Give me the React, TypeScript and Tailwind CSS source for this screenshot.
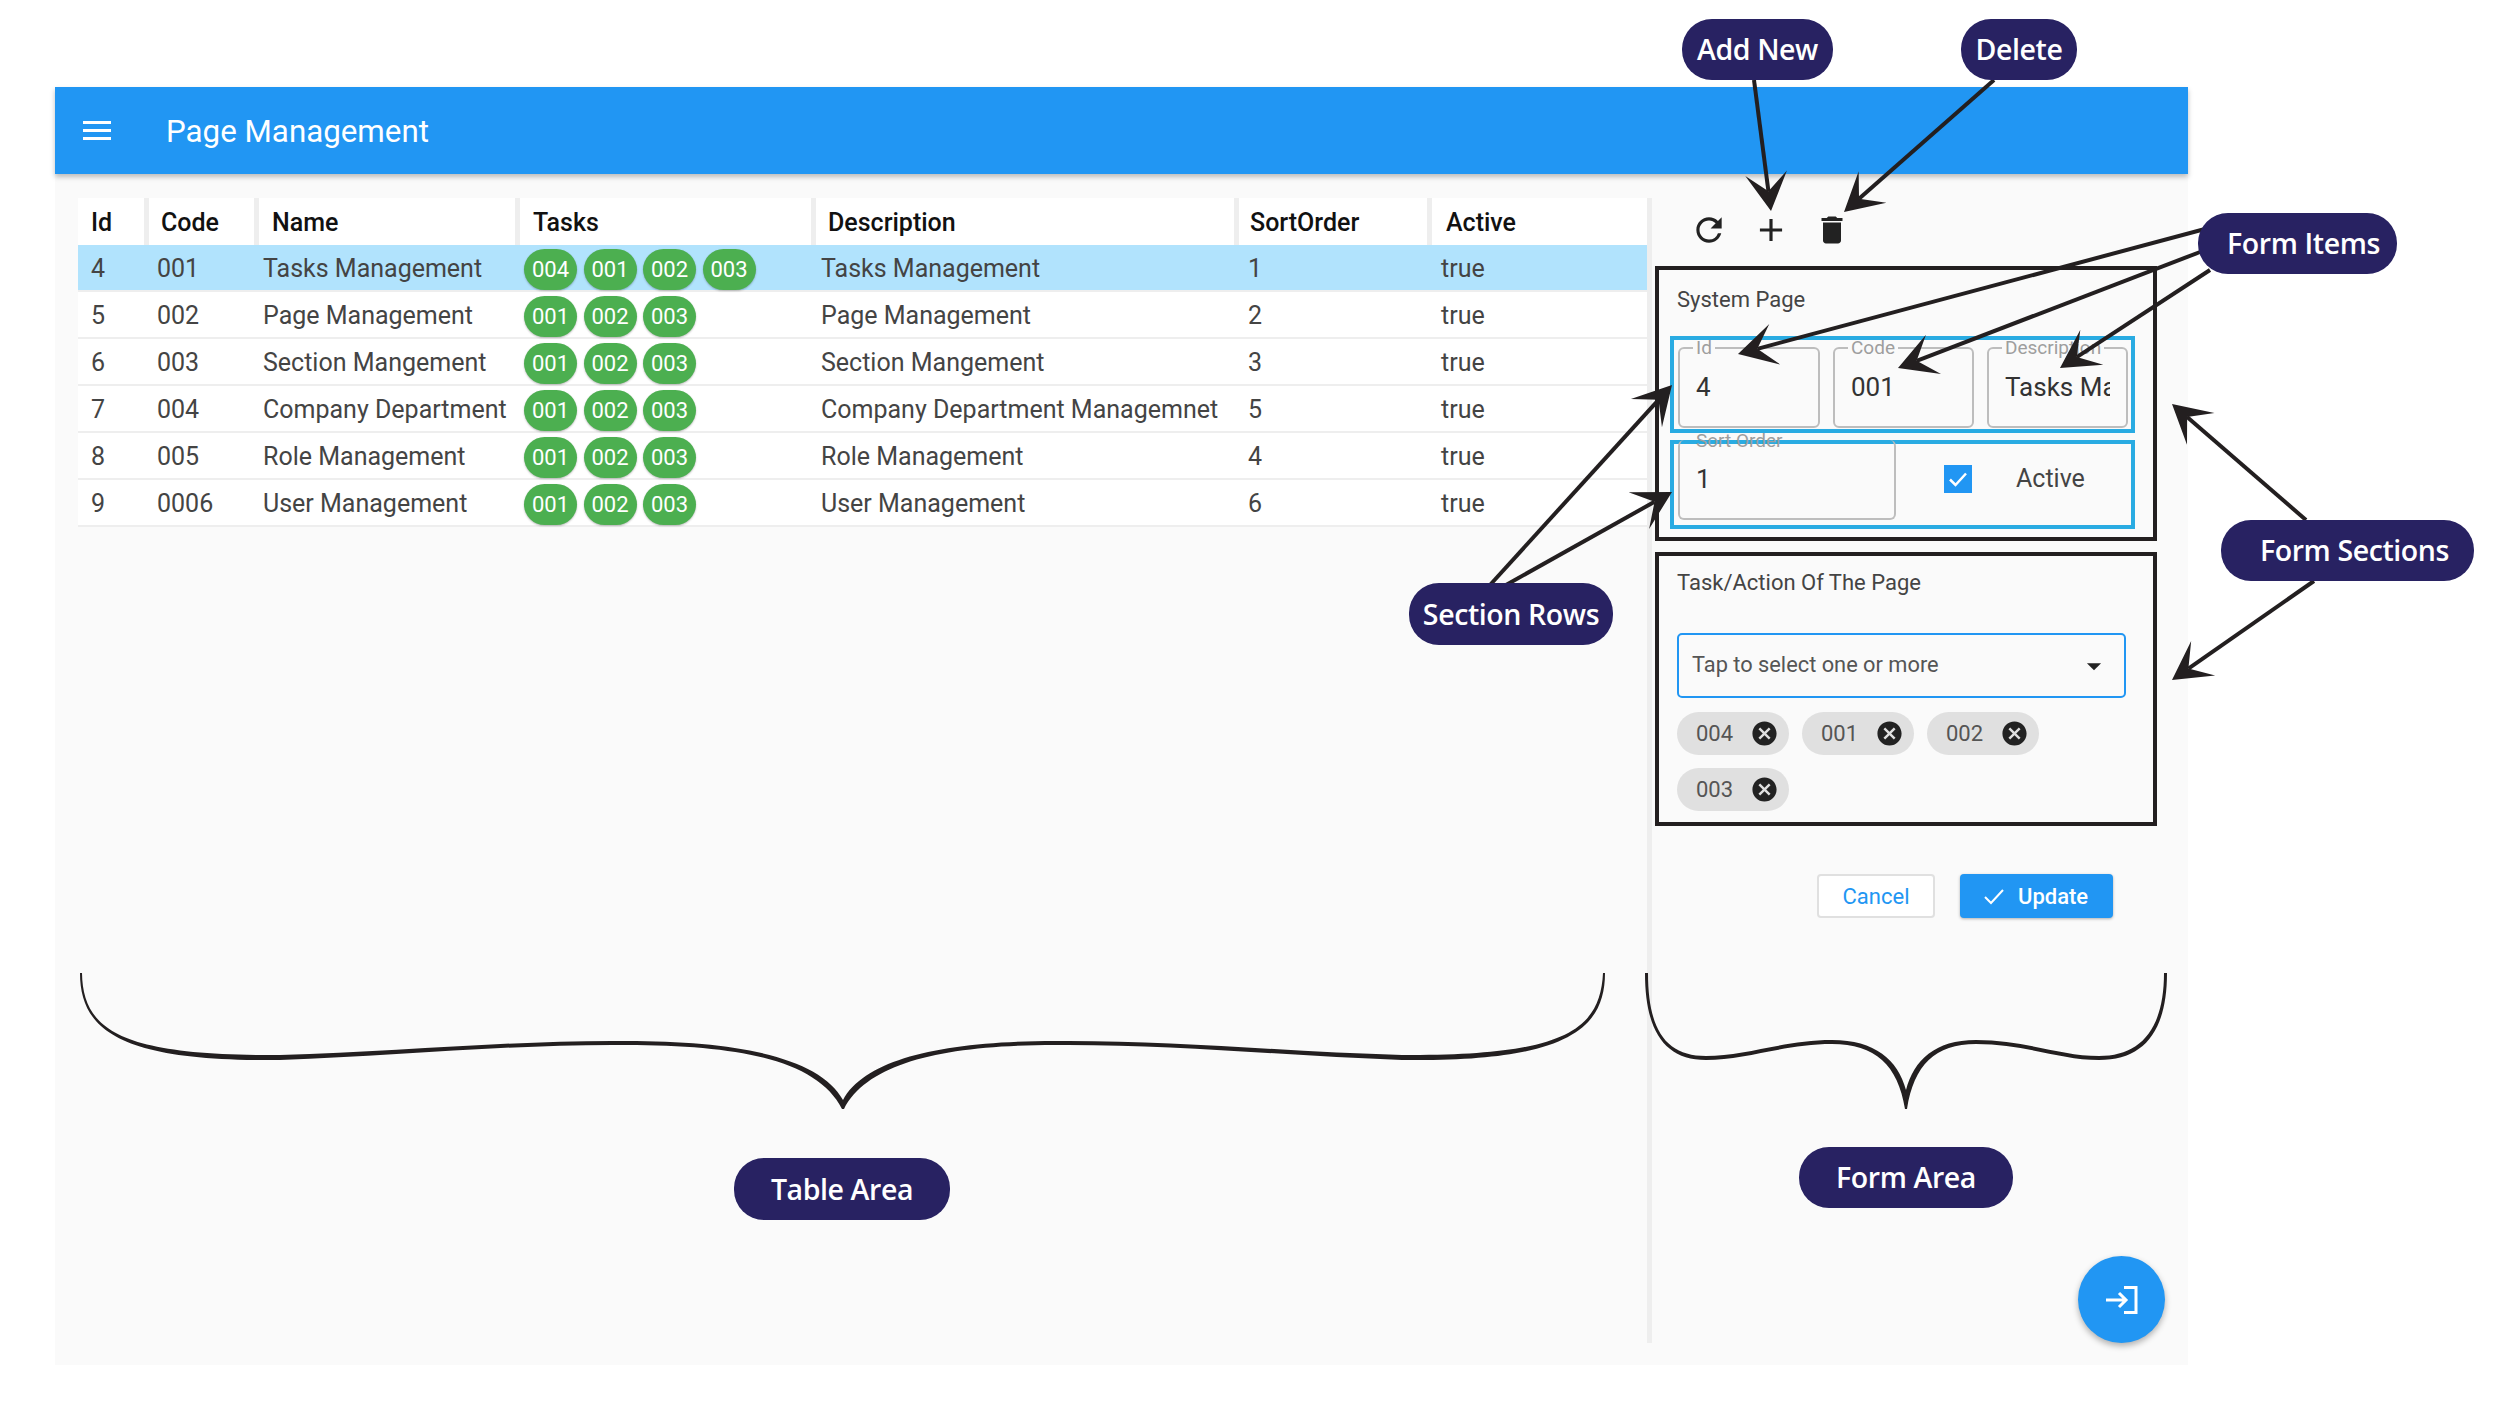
import React from 'react';
import { MdAdd, MdArrowDropDown, MdCancel, MdDelete, MdRefresh } from 'react-icons/md';

const ROWS = [
  { id: '4', code: '001', name: 'Tasks Management', tasks: ['004', '001', '002', '003'], description: 'Tasks Management', sort: '1', active: 'true' },
  { id: '5', code: '002', name: 'Page Management', tasks: ['001', '002', '003'], description: 'Page Management', sort: '2', active: 'true' },
  { id: '6', code: '003', name: 'Section Mangement', tasks: ['001', '002', '003'], description: 'Section Mangement', sort: '3', active: 'true' },
  { id: '7', code: '004', name: 'Company Department', tasks: ['001', '002', '003'], description: 'Company Department Managemnet', sort: '5', active: 'true' },
  { id: '8', code: '005', name: 'Role Management', tasks: ['001', '002', '003'], description: 'Role Management', sort: '4', active: 'true' },
  { id: '9', code: '0006', name: 'User Management', tasks: ['001', '002', '003'], description: 'User Management', sort: '6', active: 'true' },
];

const HEADERS = [
  { label: 'Id', className: 'w-[71px] pl-[13px] border-r-[5px]' },
  { label: 'Code', className: 'w-[110px] pl-[12px] border-r-[5px]' },
  { label: 'Name', className: 'w-[261px] pl-[13px] border-r-[5px]' },
  { label: 'Tasks', className: 'w-[296px] pl-[13px] border-r-[5px]' },
  { label: 'Description', className: 'w-[423px] pl-[12px] border-r-[5px]' },
  { label: 'SortOrder', className: 'w-[193px] pl-[11px] border-r-[5px]' },
  { label: 'Active', className: 'w-[214px] pl-[14px]' },
];

// annotation arrows, real page coordinates
const ARROWS = [
  { from: [1754, 80], to: [1771, 211] },
  { from: [1994, 80], to: [1844, 212] },
  { from: [2205, 229], to: [1738, 354] },
  { from: [2200, 252], to: [1898, 368] },
  { from: [2210, 270], to: [2060, 368] },
  { from: [2306, 520], to: [2172, 404] },
  { from: [2314, 581], to: [2172, 680] },
  { from: [1490, 585], to: [1672, 385] },
  { from: [1506, 585], to: [1672, 492] },
];

function Arrow({ from, to }: { from: number[]; to: number[] }) {
  const dx = to[0] - from[0];
  const dy = to[1] - from[1];
  const len = Math.hypot(dx, dy);
  const ux = dx / len;
  const uy = dy / len;
  const pt = (back: number, side: number) => `${to[0] - ux * back - uy * side},${to[1] - uy * back + ux * side}`;
  const nx = to[0] - ux * 20;
  const ny = to[1] - uy * 20;
  return (
    <g>
      <line x1={from[0]} y1={from[1]} x2={nx} y2={ny} stroke="#231f20" strokeWidth="4" />
      <polygon points={`${to[0]},${to[1]} ${pt(38, 21)} ${pt(20, 0)} ${pt(38, -21)}`} fill="#231f20" />
    </g>
  );
}

function Pill({ label, className }: { label: string; className: string }) {
  return (
    <div className={`absolute z-20 flex items-center justify-center rounded-[30px] bg-[#282262] font-['Open_Sans',sans-serif] text-[28.5px] font-semibold tracking-[-0.4px] text-white ${className}`}>
      {label}
    </div>
  );
}

function TaskChip({ label }: { label: string }) {
  return (
    <span className="flex h-[41px] w-[53px] items-center justify-center rounded-[21px] bg-[#4caf50] text-[22px] text-white shadow-[0_1px_2px_rgba(0,0,0,0.25)]">
      {label}
    </span>
  );
}

function Field({ label, value, className }: { label: string; value: string; className: string }) {
  return (
    <fieldset className={`-mt-[4px] h-[92px] min-w-0 shrink-0 rounded-[6px] border-2 border-[#bdbdbd] pr-[16px] pl-[16px] ${className}`}>
      <legend className="-ml-[3px] px-[3px] text-[19px] leading-[23px] whitespace-nowrap text-[#9e9e9e]">{label}</legend>
      <div className="mt-[10px] overflow-hidden text-[26px] leading-[36px] whitespace-nowrap text-[#333]">{value}</div>
    </fieldset>
  );
}

function SelectedChip({ label }: { label: string }) {
  return (
    <span className="flex h-[43px] w-[112px] items-center justify-between rounded-[22px] bg-[#e0e0e0] pr-[10px] pl-[19px] text-[22px] text-[#555]">
      {label}
      <MdCancel className="text-[29px] text-[#222]" />
    </span>
  );
}

export default function App() {
  return (
    <div className="relative h-[1425px] w-[2500px] overflow-hidden bg-white font-['Roboto',sans-serif]">
      <div className="ml-[55px] pt-[87px]">
        <div className="relative flex h-[1278px] w-[2133px] flex-col bg-[#fafafa]">
          <header className="z-10 flex h-[87px] items-center bg-[#2196f3] pl-[28px] text-white shadow-[0_3px_5px_rgba(0,0,0,0.25)]">
            <div className="flex h-[19px] w-[28px] flex-col justify-between">
              <span className="h-[3px] bg-white" />
              <span className="h-[3px] bg-white" />
              <span className="h-[3px] bg-white" />
            </div>
            <h1 className="ml-[55px] pt-[4px] text-[31.3px] font-normal">Page Management</h1>
          </header>

          <div className="flex flex-1">
            {/* table area */}
            <div className="w-[1592px] pt-[24px] pl-[23px]">
              <div className="flex h-[47px] bg-white text-[25px] font-medium text-[#111]">
                {HEADERS.map((h) => (
                  <div key={h.label} className={`flex items-center border-[#eeeeee] pt-[3px] ${h.className}`}>
                    {h.label}
                  </div>
                ))}
              </div>
              {ROWS.map((row, i) => (
                <div
                  key={row.id}
                  className={`flex h-[47px] items-center border-b-2 border-[#eeeeee] pt-[3px] text-[25px] text-[#444] ${i === 0 ? 'bg-[#b1e3fd]' : 'bg-white'}`}
                >
                  <div className="w-[79px] pl-[13px]">{row.id}</div>
                  <div className="w-[106px] pl-0">{row.code}</div>
                  <div className="w-[261px] whitespace-nowrap">{row.name}</div>
                  <div className="flex w-[297px] gap-[6.5px]">
                    {row.tasks.map((t) => (
                      <TaskChip key={t} label={t} />
                    ))}
                  </div>
                  <div className="w-[427px] whitespace-nowrap">{row.description}</div>
                  <div className="w-[193px]">{row.sort}</div>
                  <div>{row.active}</div>
                </div>
              ))}
            </div>

            <div className="mt-[24px] h-[1145px] w-[5px] bg-[#eeeeee]" />

            {/* form area */}
            <div className="flex-1 pl-[3px]">
              <div className="mt-[34px] flex h-[44px] items-center gap-[24px] pl-[35px] text-[#222]">
                <MdRefresh className="text-[38px]" />
                <MdAdd className="text-[38px]" />
                <MdDelete className="text-[36px]" />
              </div>

              <section className="mt-[14px] h-[275px] w-[502px] border-4 border-[#231f20] pl-[11px]">
                <h2 className="mt-[17px] ml-[7px] text-[22px] leading-[26px] font-normal text-[#444]">System Page</h2>
                <div className="mt-[23px] flex h-[97px] w-[465px] gap-[13px] border-4 border-[#29abe2] pl-[4px]">
                  <Field label="Id" value="4" className="w-[142px]" />
                  <Field label="Code" value="001" className="w-[141px]" />
                  <Field label="Description" value="Tasks Ma" className="w-[141px]" />
                </div>
                <div className="mt-[7px] flex h-[89px] w-[465px] items-center border-4 border-[#29abe2] pl-[4px]">
                  <div className="relative -mt-[4px] flex h-[80px] w-[218px] items-center self-start rounded-[6px] border-2 border-t-0 border-[#bdbdbd] pl-[16px] text-[26px] text-[#333]">
                    <span className="absolute -top-[11px] left-[16px] text-[19px] leading-[23px] text-[#9e9e9e]">Sort Order</span>
                    1
                  </div>
                  <span className="mb-[11px] ml-[48px] flex h-[28px] w-[28px] items-center justify-center bg-[#2196f3]">
                    <svg viewBox="0 0 24 24" className="h-[24px] w-[24px]" fill="none" stroke="white" strokeWidth="2.5">
                      <path d="M4 12.5l5.5 5.5L20 6.5" />
                    </svg>
                  </span>
                  <span className="mb-[11px] ml-[44px] text-[25px] text-[#444]">Active</span>
                </div>
              </section>

              <section className="mt-[11px] h-[274px] w-[502px] border-4 border-[#231f20] pl-[18px]">
                <h2 className="mt-[14px] text-[22px] leading-[26px] font-normal text-[#444]">Task/Action Of The Page</h2>
                <div className="mt-[37px] flex h-[65px] w-[449px] items-center justify-between rounded-[5px] border-2 border-[#2196f3] pr-[13px] pl-[13px] text-[21.8px] text-[#555]">
                  Tap to select one or more
                  <MdArrowDropDown className="text-[34px] text-[#222]" />
                </div>
                <div className="mt-[14px] flex w-[449px] flex-wrap gap-x-[13px] gap-y-[13px]">
                  <SelectedChip label="004" />
                  <SelectedChip label="001" />
                  <SelectedChip label="002" />
                  <SelectedChip label="003" />
                </div>
              </section>

              <div className="mt-[48px] flex w-[458px] justify-end gap-[25px]">
                <button className="h-[44px] w-[118px] rounded-[4px] border-2 border-[#e0e0e0] bg-white text-[22px] text-[#2196f3]">Cancel</button>
                <button className="flex h-[44px] w-[153px] items-center rounded-[4px] bg-[#2196f3] pl-[22px] text-[22px] font-medium text-white shadow-[0_1px_3px_rgba(0,0,0,0.3)]">
                  <svg viewBox="0 0 24 24" className="mr-[12px] h-[24px] w-[24px]" fill="none" stroke="white" strokeWidth="2">
                    <path d="M3 13l6 6L21 6" />
                  </svg>
                  Update
                </button>
              </div>
            </div>
          </div>

          <button className="absolute right-[23px] bottom-[22px] flex h-[87px] w-[87px] items-center justify-center rounded-full bg-[#2196f3] shadow-[0_3px_6px_rgba(0,0,0,0.3)]">
            <svg viewBox="0 0 32 28" className="h-[28px] w-[32px]" fill="none" stroke="white" strokeWidth="3">
              <path d="M18 1.5h12v25H18" />
              <path d="M0 14h20M13 7l7 7-7 7" />
            </svg>
          </button>
        </div>
      </div>

      {/* annotation layer */}
      <svg className="pointer-events-none absolute inset-0 z-20 h-[1425px] w-[2500px]" viewBox="0 0 2500 1425">
        {ARROWS.map((a, i) => (
          <Arrow key={i} from={a.from} to={a.to} />
        ))}
        <path
          d="M80 973C80 1030 120 1062 280 1060C400 1056 510 1044 626 1045C745 1045 818 1062 842 1109H844C868 1062 946 1045 1055 1045C1170 1044 1290 1056 1402 1060C1565 1062 1605 1030 1605 973H1603C1600 1030 1565 1056 1402 1055C1290 1052 1170 1040 1055 1041C945 1041 866 1058 843 1100C820 1058 740 1041 626 1041C510 1040 400 1052 280 1055C120 1056 83 1030 82 973Z"
          fill="#231f20"
        />
        <path
          d="M1645 973C1645 1030 1664 1060 1706 1060C1745 1060 1785 1044 1832 1044C1875 1044 1898 1065 1905 1109H1907C1914 1065 1935 1044 1976 1044C2025 1044 2060 1060 2099 1060C2145 1060 2167 1030 2167 973H2164C2164 1030 2140 1056 2099 1056C2060 1056 2025 1040 1976 1040C1935 1040 1914 1060 1906 1090C1898 1060 1875 1040 1832 1040C1785 1040 1745 1056 1706 1056C1666 1056 1648 1030 1648 973Z"
          fill="#231f20"
        />
      </svg>

      <Pill label="Add New" className="top-[19px] left-[1682px] h-[61px] w-[151px]" />
      <Pill label="Delete" className="top-[19px] left-[1961px] h-[61px] w-[116px]" />
      <Pill label="Form Items" className="top-[213px] left-[2198px] h-[61px] w-[199px] pl-[12px]" />
      <Pill label="Form Sections" className="top-[520px] left-[2221px] h-[61px] w-[253px] pl-[14px]" />
      <Pill label="Section Rows" className="top-[583px] left-[1409px] h-[62px] w-[204px]" />
      <Pill label="Table Area" className="top-[1158px] left-[734px] h-[62px] w-[216px]" />
      <Pill label="Form Area" className="top-[1147px] left-[1799px] h-[61px] w-[214px]" />
    </div>
  );
}
